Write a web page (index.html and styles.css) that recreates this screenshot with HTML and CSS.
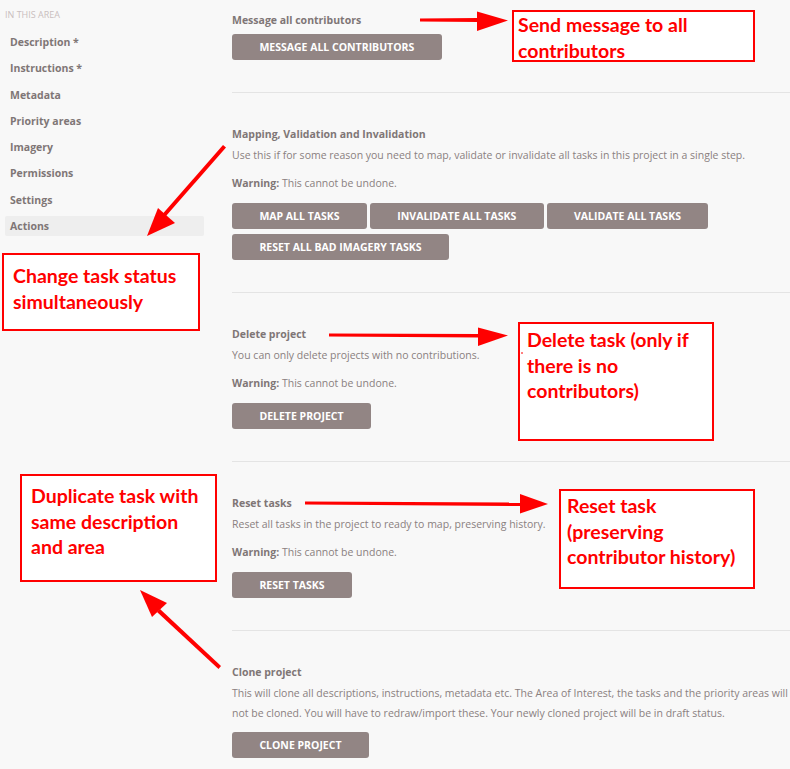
FILE: index.html
```html
<!DOCTYPE html>
<html lang="en">
<head>
<meta charset="utf-8">
<title>Project actions</title>
<link rel="stylesheet" href="styles.css">
</head>
<body>
<div class="page">
  <aside class="sidebar">
    <div class="sidebar-title">In this area</div>
    <nav class="nav">
      <a class="nav-item">Description *</a>
      <a class="nav-item">Instructions *</a>
      <a class="nav-item">Metadata</a>
      <a class="nav-item">Priority areas</a>
      <a class="nav-item">Imagery</a>
      <a class="nav-item">Permissions</a>
      <a class="nav-item">Settings</a>
      <a class="nav-item active">Actions</a>
    </nav>
  </aside>
  <main class="main">
    <section class="section section-first">
      <h3 class="section-title">Message all contributors</h3>
      <div class="btns btns-tight"><button class="btn">Message all contributors</button></div>
    </section>
    <section class="section">
      <h3 class="section-title">Mapping, Validation and Invalidation</h3>
      <p class="desc">Use this if for some reason you need to map, validate or invalidate all tasks in this project in a single step.</p>
      <p class="warn"><strong>Warning:</strong> This cannot be undone.</p>
      <div class="btns">
        <button class="btn">Map all tasks</button>
        <button class="btn">Invalidate all tasks</button>
        <button class="btn">Validate all tasks</button>
        <button class="btn">Reset all bad imagery tasks</button>
      </div>
    </section>
    <section class="section">
      <h3 class="section-title">Delete project</h3>
      <p class="desc">You can only delete projects with no contributions.</p>
      <p class="warn"><strong>Warning:</strong> This cannot be undone.</p>
      <div class="btns"><button class="btn">Delete project</button></div>
    </section>
    <section class="section">
      <h3 class="section-title">Reset tasks</h3>
      <p class="desc">Reset all tasks in the project to ready to map, preserving history.</p>
      <p class="warn"><strong>Warning:</strong> This cannot be undone.</p>
      <div class="btns"><button class="btn">Reset tasks</button></div>
    </section>
    <section class="section section-last">
      <h3 class="section-title">Clone project</h3>
      <p class="desc">This will clone all descriptions, instructions, metadata etc. The Area of Interest, the tasks and the priority areas will not be cloned. You will have to redraw/import these. Your newly cloned project will be in draft status.</p>
      <div class="btns btns-clone"><button class="btn">Clone project</button></div>
    </section>
  </main>
</div>

<div class="note note-message">Send message to all<br>contributors</div>
<div class="note note-status">Change task status<br>simultaneously</div>
<div class="note note-delete">Delete task (only if<br>there is no<br>contributors)</div>
<div class="note note-clone">Duplicate task with<br>same description<br>and area</div>
<div class="note note-reset">Reset task<br>(preserving<br>contributor history)</div>

<svg class="arrows" width="790" height="769" viewBox="0 0 790 769" xmlns="http://www.w3.org/2000/svg">
  <g fill="#ff0000" stroke="none">
    <polygon points="420,18.5 478,18 478,22 420,21.5"/>
    <polygon points="477,11.5 508,20.5 477,31"/>
    <polygon points="223,145 226,147.5 166,216 163,213.5"/>
    <polygon points="147,236 158,208 175,223"/>
    <polygon points="329,333.5 479,334 479,337.5 329,336.5"/>
    <polygon points="478,327.5 508,335.5 478,346"/>
    <polygon points="221,666 218.5,669 157,612 160,609"/>
    <polygon points="140,590 167,603 152,617"/>
    <polygon points="305,501.5 521,502.5 521,506 305,504.5"/>
    <polygon points="520,494 548,504 520,513.5"/>
    <rect x="521.5" y="352" width="1" height="2"/>
  </g>
</svg>
</body>
</html>
```

FILE: styles.css
```css
* { box-sizing: border-box; }

html, body {
  margin: 0;
  padding: 0;
  background: #f8f8f8;
}

body {
  font-family: "Open Sans", "Noto Sans", sans-serif;
  color: #8a8080;
  width: 790px;
  height: 769px;
  overflow: hidden;
  position: relative;
}

.page {
  display: flex;
  gap: 28px;
}

.sidebar {
  width: 204px;
  flex: none;
  padding: 5px 0 0 5px;
}

.sidebar-title {
  font-size: 9px;
  line-height: 20px;
  text-transform: uppercase;
  color: #c9bebe;
  margin-bottom: 7px;
}

.nav {
  display: flex;
  flex-direction: column;
}

.nav-item {
  display: block;
  height: 20px;
  line-height: 20px;
  padding-left: 5px;
  margin-bottom: 6.28px;
  font-size: 10.5px;
  font-weight: 700;
  color: #7f7676;
  border-radius: 2px;
}

.nav-item.active {
  background: #eeeeee;
}

.main {
  flex: 1;
  min-width: 0;
}

.section {
  padding: 31px 0 32px;
  border-bottom: 1px solid #e4e4e4;
}

.section-first {
  padding-top: 10px;
}

.section-last {
  border-bottom: none;
}

.section-title {
  margin: 0;
  font-size: 10.5px;
  line-height: 21px;
  font-weight: 700;
  color: #7f7676;
}

.desc {
  margin: 0;
  font-size: 10.5px;
  line-height: 20px;
  color: #8a8080;
}

.warn {
  margin: 8px 0 0;
  font-size: 10.5px;
  line-height: 20px;
  color: #8a8080;
}

.warn strong {
  color: #7f7676;
}

.btns {
  display: flex;
  flex-wrap: wrap;
  gap: 5px 3px;
  margin-top: 10px;
}

.btns-tight { margin-top: 3px; }
.btns-clone { margin-top: 9px; }

.btn {
  height: 26px;
  padding: 0 27.4px;
  border: none;
  border-radius: 3px;
  background: #928584;
  color: #ffffff;
  font-family: "Open Sans", "Noto Sans", sans-serif;
  font-size: 10.5px;
  font-weight: 700;
  text-transform: uppercase;
  line-height: 26px;
}

.note {
  position: absolute;
  background: #ffffff;
  border: 2px solid #ff0000;
  color: #ff0000;
  font-family: Lato, "Open Sans", sans-serif;
  font-weight: 700;
  font-size: 19.5px;
  line-height: 25.6px;
  white-space: nowrap;
}

.note-message { left: 512px; top: 10px; width: 243px; height: 52px; padding: 0 0 0 4px; }
.note-status { left: 2px; top: 253px; width: 198px; height: 78px; padding: 8px 0 0 9px; }
.note-delete { left: 518px; top: 322px; width: 196px; height: 119px; padding: 3px 0 0 7px; }
.note-clone { left: 20px; top: 474px; width: 197px; height: 108px; padding: 7px 0 0 9px; }
.note-reset { left: 559px; top: 489px; width: 196px; height: 100px; padding: 2px 0 0 6px; }

.arrows {
  position: absolute;
  left: 0;
  top: 0;
  pointer-events: none;
}
```
